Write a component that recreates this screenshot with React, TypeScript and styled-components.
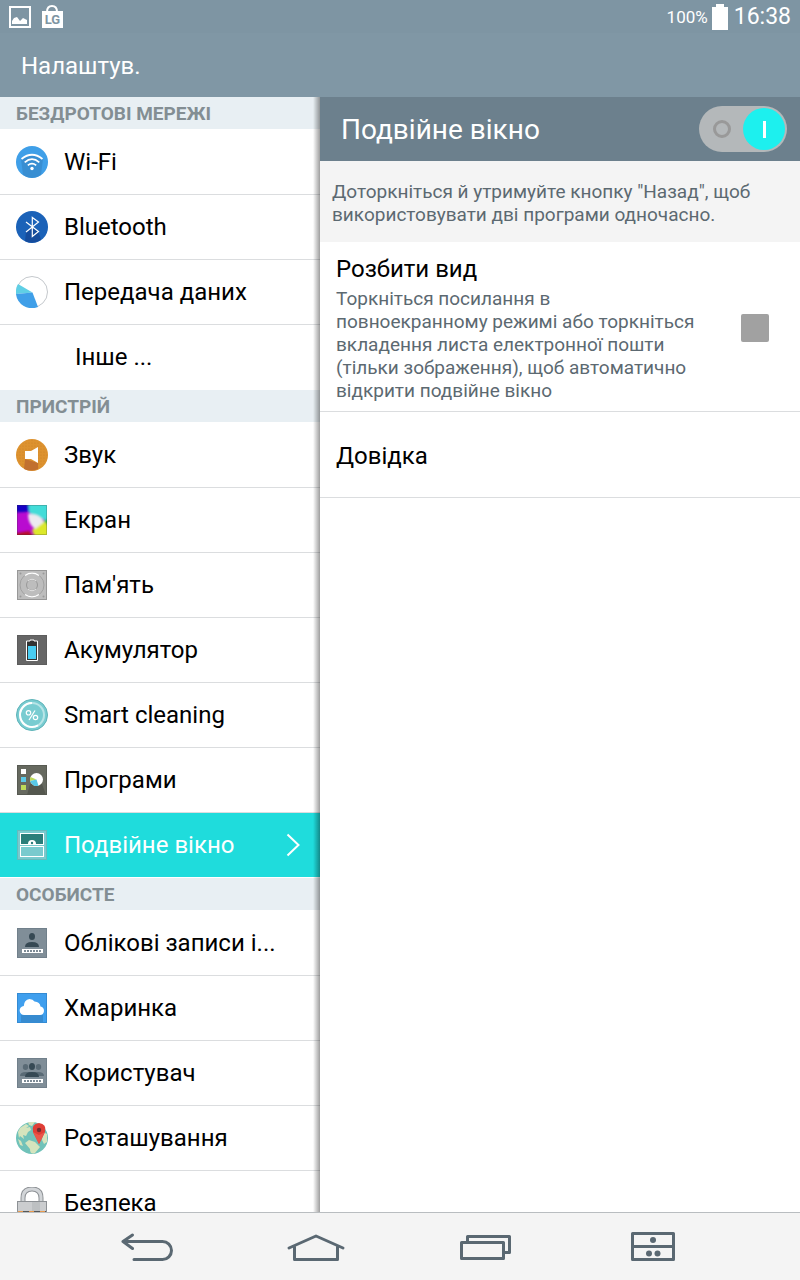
import React, { useState } from "react";
import styled, { createGlobalStyle } from "styled-components";

const GlobalStyle = createGlobalStyle`
  *, *::before, *::after { box-sizing: border-box; }
  body { margin: 0; background: #fff; color: #000; font-family: Roboto, "Noto Sans", sans-serif; }
`;

const Screen = styled.div`
  display: flex;
  flex-direction: column;
  height: 100vh;
`;

const StatusBar = styled.div`
  display: flex;
  align-items: center;
  flex: none;
  height: 33px;
  padding: 0 9px;
  background: #7e95a3;
  color: #fff;
`;

const StatusIcons = styled.div`
  display: flex;
  align-items: center;
  gap: 10px;
  flex: 1;
`;

const StatusInfo = styled.div`
  display: flex;
  align-items: center;
  gap: 4px;
`;

const BatteryText = styled.span`
  font-size: 17px;
`;

const Clock = styled.time`
  margin-left: 2px;
  font-size: 23px;
`;

const TitleBar = styled.header`
  display: flex;
  align-items: center;
  flex: none;
  height: 64px;
  padding: 2px 21px 0;
  background: #8097a5;
`;

const PageTitle = styled.h1`
  margin: 0;
  color: #fff;
  font-size: 24px;
  font-weight: 400;
  line-height: 32px;
`;

const Body = styled.div`
  display: grid;
  grid-template-columns: 2fr 3fr;
  grid-template-rows: minmax(0, 1fr);
  flex: 1;
  min-height: 0;
`;

const Sidebar = styled.nav`
  position: relative;
  overflow: hidden;

  &::after {
    content: "";
    position: absolute;
    inset: 0 0 0 auto;
    width: 7px;
    background: linear-gradient(to right, rgba(0, 0, 0, 0), rgba(0, 0, 0, 0.38));
    pointer-events: none;
  }
`;

const SectionTitle = styled.h2`
  height: 33px;
  margin: 0;
  padding: 0 16px;
  border-bottom: 1px solid #fff;
  background: #e8eff3;
  color: #838e93;
  font-size: 19px;
  font-weight: 700;
  line-height: 33px;
`;

const List = styled.ul`
  margin: 0;
  padding: 0;
  list-style: none;
`;

const RowLink = styled.a<{ $active?: boolean; $last?: boolean }>`
  display: flex;
  align-items: center;
  gap: 16px;
  height: 65px;
  padding: 0 20px 0 16px;
  border-bottom: 1px solid ${(p) => (p.$last ? "#fff" : "#dbdddf")};
  background: ${(p) => (p.$active ? "#1fdcdc" : "#fff")};
  color: ${(p) => (p.$active ? "#fff" : "#000")};
  text-decoration: none;

  svg { flex: none; }
`;

const RowLabel = styled.span<{ $indent?: boolean }>`
  flex: 1;
  min-width: 0;
  margin-left: ${(p) => (p.$indent ? "59px" : "0")};
  margin-right: ${(p) => (p.$indent ? "0" : "8px")};
  overflow: hidden;
  font-size: 24px;
  line-height: 32px;
  text-overflow: ellipsis;
  white-space: nowrap;
`;

const Detail = styled.main`
  overflow: hidden;
`;

const DetailHeader = styled.label`
  display: flex;
  align-items: center;
  justify-content: space-between;
  height: 64px;
  padding: 0 13px 0 21px;
  background: #6c808d;
  color: #fff;
`;

const DetailTitle = styled.span`
  padding-top: 2px;
  font-size: 28px;
  line-height: 36px;
`;

const Toggle = styled.input`
  appearance: none;
  display: flex;
  align-items: center;
  justify-content: space-between;
  width: 88px;
  height: 46px;
  margin: 0;
  padding: 0 2px 0 14px;
  border-radius: 23px;
  background: #b4b8ba;

  &::before {
    content: "";
    width: 18px;
    height: 18px;
    border: 3px solid #999;
    border-radius: 50%;
  }

  &::after {
    content: "";
    width: 42px;
    height: 42px;
    border-radius: 50%;
    background: linear-gradient(#fff, #fff) center / 3px 17px no-repeat #1df0ee;
  }

  &:not(:checked) { flex-direction: row-reverse; padding: 0 14px 0 2px; }
`;

const Hint = styled.p`
  margin: 0;
  padding: 19px 12px 16px;
  background: #f4f4f4;
  color: #5c6971;
  font-size: 19px;
  line-height: 23px;
`;

const Option = styled.label`
  display: flex;
  align-items: center;
  justify-content: space-between;
  gap: 16px;
  padding: 11px 31px 9px 16px;
  border-bottom: 1px solid #dbdddf;
`;

const OptionText = styled.span`
  display: flex;
  flex-direction: column;
  max-width: 364px;
`;

const OptionTitle = styled.span`
  margin-bottom: 2px;
  font-size: 24px;
  line-height: 32px;
`;

const OptionSummary = styled.span`
  color: #5c6971;
  font-size: 19px;
  line-height: 23px;
`;

const CheckBox = styled.input`
  appearance: none;
  flex: none;
  width: 28px;
  height: 28px;
  margin: 0;
  border-radius: 2px;
  background: #a1a1a1;

  &:checked { background: #1fdcdc; }
`;

const HelpLink = styled.a`
  display: flex;
  align-items: center;
  height: 86px;
  padding: 2px 16px 0;
  border-bottom: 1px solid #dbdddf;
  color: #000;
  font-size: 24px;
  text-decoration: none;
`;

const NavBar = styled.footer`
  display: grid;
  grid-template-columns: repeat(4, 168px);
  justify-content: center;
  flex: none;
  height: 68px;
  padding-top: 2px;
  border-top: 1px solid #b9bdc0;
  background: #f4f4f4;
`;

const NavButton = styled.button`
  display: flex;
  align-items: center;
  justify-content: center;
  padding: 0;
  border: 0;
  background: none;
`;

const Icon = ({ children }: { children: React.ReactNode }) => (
  <svg width="32" height="32" viewBox="0 0 32 32" aria-hidden="true">{children}</svg>
);

const Tile = ({ fill, edge }: { fill: string; edge: string }) => (
  <rect x="1.5" y="1.5" width="29" height="29" fill={fill} stroke={edge} />
);

const WifiIcon = () => (
  <Icon>
    <circle cx="16" cy="16" r="16" fill="#3f9fe8" />
    <path d="M5 13L7 29Q16 35 25 29L27 13Q16 4 5 13Z" fill="#3788cb" opacity=".75" />
    <g fill="none" stroke="#fff" strokeWidth="1.7">
      <path d="M5.5 13Q16 4.500 26.500 13" />
      <path d="M8.700 16.300Q16 10 23.300 16.300" />
      <path d="M11.800 19.400Q16 16 20.200 19.400" />
    </g>
    <circle cx="16" cy="22.500" r="1.700" fill="#fff" />
  </Icon>
);

const BluetoothIcon = () => (
  <Icon>
    <circle cx="16" cy="16" r="16" fill="#1b62b8" />
    <path d="M10 21L16 16L22.500 20.500L25 29Q16 34 9 30Z" fill="#154c9c" />
    <path d="M10 11L22.500 20.500L16.300 25.500V6.500L22.500 11L10 21" fill="none" stroke="#fff" strokeWidth="1.200" />
  </Icon>
);

const DataIcon = () => (
  <Icon>
    <circle cx="16" cy="16" r="15.500" fill="#fff" stroke="#c4c8cc" />
    <path d="M16.500 16.500L2 8A16 16 0 0 0 0 18Z" fill="#5fcfe5" />
    <path d="M16.500 16.500L0 18A16 16 0 0 0 22 31Z" fill="#3f9fe8" />
  </Icon>
);

const SoundIcon = () => (
  <Icon>
    <defs>
      <pattern id="speakerDots" width="3" height="3" patternUnits="userSpaceOnUse">
        <circle cx="1" cy="1" r=".6" fill="#c97f24" />
      </pattern>
    </defs>
    <circle cx="16" cy="16" r="16" fill="#dd922f" />
    <circle cx="16" cy="16" r="15" fill="url(#speakerDots)" />
    <path d="M9 20L22 24V30Q15 33 8 30Z" fill="#c1702f" />
    <path d="M9 12H15L22 8V24L15 20H9Z" fill="#fff" />
  </Icon>
);

const DisplayIcon = () => (
  <Icon>
    <defs>
      <filter id="colorBlend" x="-20%" y="-20%" width="140%" height="140%"><feGaussianBlur stdDeviation="1.3" /></filter>
      <clipPath id="displayClip"><rect x="1" y="1" width="30" height="30" /></clipPath>
    </defs>
    <g clipPath="url(#displayClip)">
      <rect x="1" y="1" width="30" height="30" fill="#b90bd0" />
      <g filter="url(#colorBlend)">
        <path d="M-4 -4H14V7Q8 9 -4 8Z" fill="#1806c4" />
        <path d="M12 -4H36V18L26 15L13 9Z" fill="#42dcd8" />
        <path d="M36 14V25L27 17Z" fill="#28cf39" />
        <path d="M16 26L27 17L36 24V36H20Z" fill="#dce829" />
        <path d="M-4 30L13 27L20 36H-4Z" fill="#b8112c" />
        <path d="M12 10Q24 9 28 18L19 25Q12 20 12 10Z" fill="#eceaf0" />
      </g>
    </g>
    <rect x="1.5" y="1.5" width="29" height="29" fill="none" stroke="#333" strokeOpacity=".25" />
  </Icon>
);

const MemoryIcon = () => (
  <Icon>
    <Tile fill="#bdbdbd" edge="#989898" />
    <circle cx="16" cy="16" r="12" fill="none" stroke="#a2a2a2" />
    <path d="M9 6.500A12 12 0 0 1 23 6.500M9 25.500A12 12 0 0 0 23 25.500" fill="none" stroke="#fff" strokeWidth="1.300" />
    <circle cx="16" cy="16" r="5.500" fill="none" stroke="#999" />
    <path d="M12 12A5.500 5.500 0 0 1 20 12M12 20A5.500 5.500 0 0 0 20 20" fill="none" stroke="#e4e4e4" />
    <g fill="#999"><circle cx="4.500" cy="4.500" r="1" /><circle cx="27.500" cy="4.500" r="1" /><circle cx="4.500" cy="27.500" r="1" /><circle cx="27.500" cy="27.500" r="1" /></g>
  </Icon>
);

const BatteryIcon = () => (
  <Icon>
    <Tile fill="#666" edge="#5d5d5d" />
    <path d="M14 6H18V7H21.500V26.500H10.500V7H14Z" fill="#333" stroke="#fff" />
    <rect x="12" y="12" width="8" height="13" fill="#49cdf2" />
  </Icon>
);

const CleaningIcon = () => (
  <Icon>
    <circle cx="16" cy="16" r="15.500" fill="#79ccd1" stroke="#5fb3b8" />
    <circle cx="16" cy="16" r="12" fill="none" stroke="#b8e5e7" strokeWidth="2" />
    <path d="M16 4A12 12 0 1 0 22 26.400" fill="none" stroke="#fff" strokeWidth="2" />
    <g fill="none" stroke="#fff" strokeWidth="1.200">
      <circle cx="12.500" cy="13.800" r="2.200" /><circle cx="19.500" cy="18.500" r="2.200" /><path d="M19 11.500L13 21" />
    </g>
  </Icon>
);

const AppsIcon = () => (
  <Icon>
    <Tile fill="#66695f" edge="#575a52" />
    <path d="M14 20L11 31H30L26 20Z" fill="#54574e" />
    <path d="M5 5H10V10H5Z" fill="#fff" /><path d="M5 13H10V18H5Z" fill="#59c9e8" /><path d="M5 21H10V26H5Z" fill="#bdda58" />
    <circle cx="20.500" cy="15.500" r="6.500" fill="#fff" />
    <path d="M20.500 15.500L14.500 13A6.500 6.500 0 0 0 14.200 17Z" fill="#bdda58" />
    <path d="M20.500 15.500L14.200 17A6.500 6.500 0 0 0 22.500 21.700Z" fill="#59c9e8" />
  </Icon>
);

const DualWindowIcon = () => (
  <Icon>
    <Tile fill="#79cace" edge="#65babd" />
    <rect x="4.500" y="4.500" width="23" height="11" fill="#2b7e7a" stroke="#fff" />
    <path d="M12 15A4 4 0 0 1 20 15Z" fill="#fff" /><circle cx="16" cy="14" r="1.200" fill="#2b7e7a" />
    <rect x="4.500" y="17.500" width="23" height="10" fill="#79cace" stroke="#fff" />
  </Icon>
);

const NameTag = () => (
  <>
    <rect x="6" y="22" width="21" height="4" fill="#fff" />
    <path d="M8 24H25" stroke="#7d8b96" strokeWidth="2" strokeDasharray="2 1" />
  </>
);

const AccountIcon = () => (
  <Icon>
    <Tile fill="#808e98" edge="#71808b" />
    <ellipse cx="16" cy="9.500" rx="3" ry="3.500" fill="#364954" />
    <path d="M9 20Q9 15 16 15Q23 15 23 20Z" fill="#364954" />
    <NameTag />
  </Icon>
);

const CloudIcon = () => (
  <Icon>
    <Tile fill="#3f9fee" edge="#348bd3" />
    <path d="M5 23H27V30H5Z" fill="#378bd0" />
    <path d="M8.500 23A4.500 4.500 0 0 1 7.800 14Q8 8 13.500 7Q17 7 18.500 9.500Q24 10 24.500 14.500Q28 15 28 19Q27.500 23 24 23Z" fill="#fff" />
  </Icon>
);

const UsersIcon = () => (
  <Icon>
    <Tile fill="#808e98" edge="#71808b" />
    <g fill="#596a75">
      <ellipse cx="9.500" cy="10" rx="2.700" ry="3" /><ellipse cx="22.500" cy="10" rx="2.700" ry="3" />
      <path d="M4 19Q4 15 10 15H22Q28 15 28 19Z" />
    </g>
    <ellipse cx="16" cy="9.500" rx="3" ry="3.500" fill="#364954" />
    <path d="M9 20Q9 15 16 15Q23 15 23 20Z" fill="#364954" />
    <NameTag />
  </Icon>
);

const LocationIcon = () => (
  <Icon>
    <circle cx="16" cy="16" r="16" fill="#70c2b9" />
    <g fill="#d5e4bd">
      <path d="M4 6L10 2L13 4L10 6L14 5L15 8L12 10L10 14L7 13L8 17L4 14L3 16L2 10Z" />
      <path d="M12 0H19L16 4L13 3ZM9 21L13 18L19 20L24 25L19 31Q14 33 14 27Z" />
      <path d="M27 10L31 12L31 20L28 22L26 18ZM2 17L5 19L7 24L4 23Z" />
    </g>
    <path d="M23 22L17 10Q15 2 23 1Q31 2 29 10Z" fill="#df3e36" />
    <path d="M23 22L17 10L23 13L29 10Z" fill="#e9564a" />
    <circle cx="23" cy="8" r="2.200" fill="#712c30" />
  </Icon>
);

const LockIcon = () => (
  <Icon>
    <path d="M7 15V11Q7 2 16 2Q25 2 25 11V15" fill="none" stroke="#8d9195" strokeWidth="5" />
    <path d="M7 15V11Q7 2 16 2Q25 2 25 11V15" fill="none" stroke="#d2d5d8" strokeWidth="3" />
    <rect x="1.500" y="14.500" width="29" height="17" fill="#cbcdcf" stroke="#8d9195" />
    <path d="M16 15H24V24H16Z" fill="#bdc0c2" />
    <path d="M2 25H30" stroke="#575757" strokeWidth="2" />
    <path d="M2 25H30" stroke="#e89a4e" strokeWidth="2" strokeDasharray="5 6" />
  </Icon>
);

type Item = { label: string; icon?: React.ComponentType; active?: boolean };

const sections: { title: string; items: Item[] }[] = [
  {
    title: "БЕЗДРОТОВІ МЕРЕЖІ",
    items: [
      { label: "Wi-Fi", icon: WifiIcon },
      { label: "Bluetooth", icon: BluetoothIcon },
      { label: "Передача даних", icon: DataIcon },
      { label: "Інше ..." },
    ],
  },
  {
    title: "ПРИСТРІЙ",
    items: [
      { label: "Звук", icon: SoundIcon },
      { label: "Екран", icon: DisplayIcon },
      { label: "Пам'ять", icon: MemoryIcon },
      { label: "Акумулятор", icon: BatteryIcon },
      { label: "Smart cleaning", icon: CleaningIcon },
      { label: "Програми", icon: AppsIcon },
      { label: "Подвійне вікно", icon: DualWindowIcon, active: true },
    ],
  },
  {
    title: "ОСОБИСТЕ",
    items: [
      { label: "Облікові записи і...", icon: AccountIcon },
      { label: "Хмаринка", icon: CloudIcon },
      { label: "Користувач", icon: UsersIcon },
      { label: "Розташування", icon: LocationIcon },
      { label: "Безпека", icon: LockIcon },
    ],
  },
];

export default function App() {
  const [enabled, setEnabled] = useState(true);
  const [split, setSplit] = useState(false);

  return (
    <Screen>
      <GlobalStyle />
      <StatusBar>
        <StatusIcons>
          <svg width="22" height="22" viewBox="0 0 22 22" aria-hidden="true">
            <rect x="1" y="1" width="20" height="20" fill="none" stroke="#fff" strokeWidth="2" />
            <path d="M3 18V15L5 12L8 11L11 15L14 12L18 14V18Z" fill="#fff" />
          </svg>
          <svg width="22" height="24" viewBox="0 0 22 24" aria-hidden="true">
            <path d="M6 7Q6 1 11 1Q16 1 16 7" fill="none" stroke="#fff" strokeWidth="2" />
            <rect x="1" y="6" width="21" height="17" fill="#fff" />
            <text x="11.500" y="19" textAnchor="middle" fontFamily="Roboto, sans-serif" fontSize="13" fontWeight="700" fill="#7e95a3">LG</text>
          </svg>
        </StatusIcons>
        <StatusInfo>
          <BatteryText>100%</BatteryText>
          <svg width="16" height="26" viewBox="0 0 16 26" aria-hidden="true">
            <path d="M4 0H12V3H16V26H0V3H4Z" fill="#fff" />
          </svg>
          <Clock>16:38</Clock>
        </StatusInfo>
      </StatusBar>
      <TitleBar>
        <PageTitle>Налаштув.</PageTitle>
      </TitleBar>
      <Body>
        <Sidebar>
          {sections.map((section) => (
            <section key={section.title}>
              <SectionTitle>{section.title}</SectionTitle>
              <List>
                {section.items.map(({ label, icon: ItemIcon, active }, i) => (
                  <li key={label}>
                    <RowLink href="#" $active={active} $last={i === section.items.length - 1} aria-current={active ? "page" : undefined}>
                      {ItemIcon && <ItemIcon />}
                      <RowLabel $indent={!ItemIcon}>{label}</RowLabel>
                      {active && (
                        <svg width="14" height="24" viewBox="0 0 14 24" aria-hidden="true">
                          <path d="M1.500 1.500L12.500 12L1.500 22.500" fill="none" stroke="#fff" strokeWidth="2" />
                        </svg>
                      )}
                    </RowLink>
                  </li>
                ))}
              </List>
            </section>
          ))}
        </Sidebar>
        <Detail>
          <DetailHeader>
            <DetailTitle>Подвійне вікно</DetailTitle>
            <Toggle type="checkbox" role="switch" checked={enabled} onChange={(e) => setEnabled(e.target.checked)} />
          </DetailHeader>
          <Hint>Доторкніться й утримуйте кнопку "Назад", щоб використовувати дві програми одночасно.</Hint>
          <Option>
            <OptionText>
              <OptionTitle>Розбити вид</OptionTitle>
              <OptionSummary>
                Торкніться посилання в повноекранному режимі або торкніться вкладення листа електронної пошти (тільки зображення), щоб автоматично відкрити подвійне вікно
              </OptionSummary>
            </OptionText>
            <CheckBox type="checkbox" checked={split} onChange={(e) => setSplit(e.target.checked)} />
          </Option>
          <HelpLink href="#">Довідка</HelpLink>
        </Detail>
      </Body>
      <NavBar>
        <NavButton type="button" aria-label="Назад">
          <svg width="54" height="32" viewBox="1 0 54 32" fill="none" stroke="#5a6872" strokeWidth="3" strokeLinecap="round" strokeLinejoin="round">
            <path d="M12.500 3L3 9.500L12.500 16.500M3 9.500H42.500A9 9 0 0 1 42.500 27.500H14" />
          </svg>
        </NavButton>
        <NavButton type="button" aria-label="Головна">
          <svg width="58" height="28" viewBox="0 0 58 28" fill="none" stroke="#5a6872" strokeWidth="3" strokeLinecap="round" strokeLinejoin="round">
            <path d="M2 14L29 2L56 14M7.500 13V25.500H50.500V13" />
          </svg>
        </NavButton>
        <NavButton type="button" aria-label="Останні програми">
          <svg width="56" height="26" viewBox="-4 0 56 26" fill="none" stroke="#5a6872" strokeWidth="3" strokeLinejoin="round">
            <path d="M1.500 7.500H43.500V23.500H1.500ZM7.500 7V1.500H49.500V17.500H44" />
          </svg>
        </NavButton>
        <NavButton type="button" aria-label="Подвійне вікно">
          <svg width="46" height="32" viewBox="-2 0 46 32" fill="none" stroke="#5a6872" strokeWidth="3" strokeLinejoin="round">
            <path d="M1.500 1.500H42.500V27.500H1.500ZM1.500 14.500H42.500" />
            <g fill="#5a6872" stroke="none"><circle cx="22" cy="8" r="3" /><circle cx="18" cy="21.500" r="3" /><circle cx="26.500" cy="21.500" r="3" /></g>
          </svg>
        </NavButton>
      </NavBar>
    </Screen>
  );
}
